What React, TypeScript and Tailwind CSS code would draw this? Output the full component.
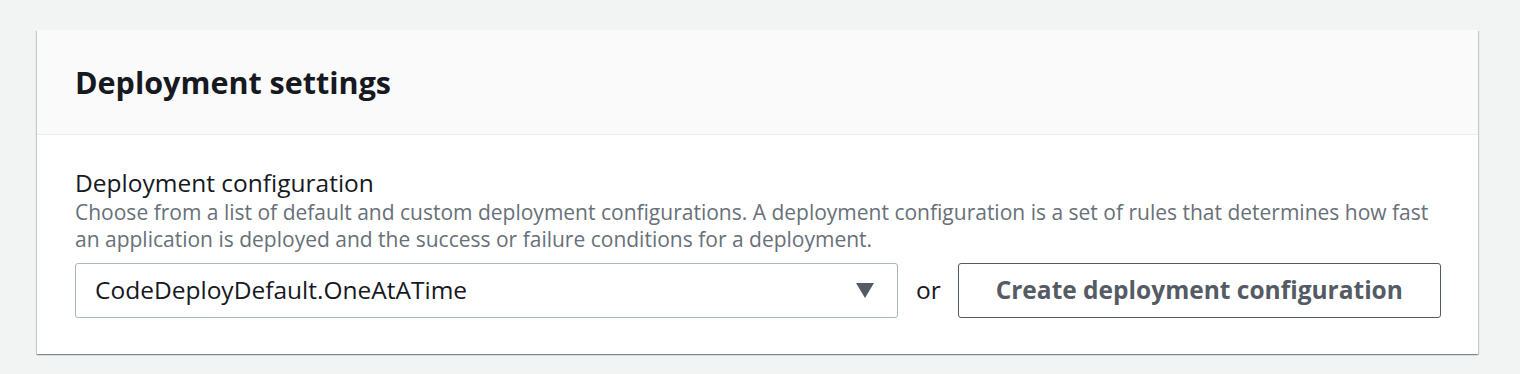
import React from 'react';

export default function App() {
  return (
    <div
      className="h-[374px] w-[1520px] bg-[#f2f3f3] pl-[37px] pr-[42px] pt-[30px]"
      style={{ fontFamily: '"Open Sans", sans-serif' }}
    >
      <div className="bg-white shadow-[0_1px_1px_0_rgba(0,28,36,0.3),1px_1px_1px_0_rgba(0,28,36,0.15),-1px_1px_1px_0_rgba(0,28,36,0.15)]">
        {/* Header */}
        <div className="flex h-[105px] items-center border-b border-[#eaeded] bg-[#fafafa] pl-[38px] pr-[37px] pt-[2px]">
          <h2 className="text-[30.5px] font-bold text-[#16191f]">Deployment settings</h2>
        </div>

        {/* Body */}
        <div className="pb-[36px] pl-[38px] pr-[36px] pt-[32px]">
          <label className="block text-[24.5px] leading-[32px] text-[#16191f]">Deployment configuration</label>
          <p className="text-[21px] leading-[27px] text-[#687078]">
            Choose from a list of default and custom deployment configurations. A deployment configuration is a set of
            rules that determines how fast an application is deployed and the success or failure conditions for a
            deployment.
          </p>
          <div className="mt-[10px] flex items-center">
            <div className="flex h-[55px] w-[823px] shrink-0 items-center justify-between rounded-[3px] border border-[#aab7b8] pl-[19px] pr-[23px]">
              <span className="text-[24.5px] text-[#16191f]">CodeDeployDefault.OneAtATime</span>
              <svg width="18" height="15" viewBox="0 0 18 15">
                <path d="M0 0h18L9 15z" fill="#545b64" />
              </svg>
            </div>
            <span className="ml-[18px] mr-[17px] text-[24.5px] text-[#16191f]">or</span>
            <button className="flex h-[55px] w-[483px] shrink-0 items-center justify-center rounded-[3px] border border-[#545b64] text-[24.5px] font-bold text-[#545b64]">
              Create deployment configuration
            </button>
          </div>
        </div>
      </div>
    </div>
  );
}
